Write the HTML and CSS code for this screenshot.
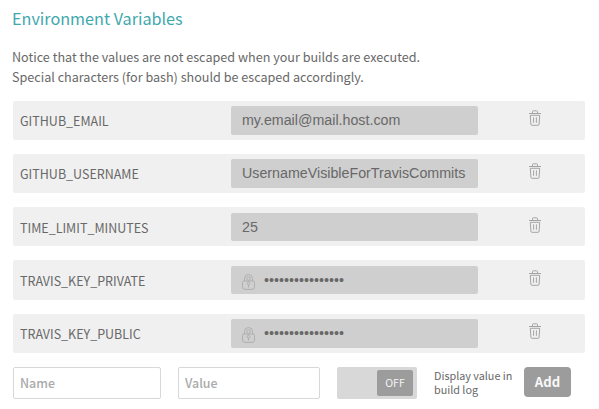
FILE: index.html
```html
<!DOCTYPE html>
<html lang="en">
<head>
<meta charset="utf-8">
<title>Environment Variables</title>
<link rel="stylesheet" href="styles.css">
</head>
<body>
<svg width="0" height="0" class="defs" aria-hidden="true">
  <symbol id="trash" viewBox="0 0 12 16">
    <path d="M0 3.500h12M3.500 3V1.600q0-.8.8-.8h3.400q.8 0 .8.8V3M1.300 5.300l.6 8.900q.1 1.100 1.100 1.100h6q1 0 1.100-1.100l.6-8.900zM4.600 7.300v5.500M7.400 7.300v5.500"/>
  </symbol>
  <symbol id="lock" viewBox="0 0 13 16">
    <path d="M2.500 7V4.500a4 4 0 0 1 8 0V7M2 7h9q1.500 0 1.500 1.500V13q0 2.400-2.400 2.400H2.900Q.5 15.400.5 13V8.500Q.5 7 2 7z"/>
    <circle cx="6.500" cy="4.600" r="1.800"/>
    <circle cx="6.500" cy="9.600" r="1.300"/>
    <path d="M6.500 11v2.500"/>
  </symbol>
</svg>
<main>
  <h1>Environment Variables</h1>
  <p class="notice">Notice that the values are not escaped when your builds are executed.<br>Special characters (for bash) should be escaped accordingly.</p>
  <ul class="vars">
    <li><span class="key">GITHUB_EMAIL</span><span class="value">my.email@mail.host.com</span><svg class="trash"><use href="#trash"/></svg></li>
    <li><span class="key">GITHUB_USERNAME</span><span class="value">UsernameVisibleForTravisCommits</span><svg class="trash"><use href="#trash"/></svg></li>
    <li class="low"><span class="key">TIME_LIMIT_MINUTES</span><span class="value">25</span><svg class="trash"><use href="#trash"/></svg></li>
    <li class="low"><span class="key">TRAVIS_KEY_PRIVATE</span><span class="value secret"><svg class="lock"><use href="#lock"/></svg><span class="dots">••••••••••••••••</span></span><svg class="trash"><use href="#trash"/></svg></li>
    <li><span class="key">TRAVIS_KEY_PUBLIC</span><span class="value secret"><svg class="lock"><use href="#lock"/></svg><span class="dots">••••••••••••••••</span></span><svg class="trash"><use href="#trash"/></svg></li>
  </ul>
  <form class="add">
    <input class="name" type="text" placeholder="Name">
    <input class="val" type="text" placeholder="Value">
    <div class="switch"><span class="knob">OFF</span></div>
    <div class="label"><div>Display value in</div><div>build log</div></div>
    <button type="button">Add</button>
  </form>
</main>
</body>
</html>
```
FILE: styles.css
```css
* { box-sizing: border-box; }
body {
  margin: 0;
  background: #fff;
  color: #686868;
  font-family: "Noto Sans CJK SC", "Noto Sans", sans-serif;
  font-size: 12.6px;
}
.defs { position: absolute; }
main { padding: 8px 14px 0 12px; }
h1 {
  margin: 0;
  color: #3fa8ad;
  font-size: 16.2px;
  font-weight: 400;
  line-height: 20px;
}
.notice { margin: 19px 0 0; line-height: 20px; }
.vars {
  display: grid;
  grid-template-rows: 39px 39px 39px 40px 39px;
  gap: 14px;
  margin: 14px 0 0 1px;
  padding: 0;
  list-style: none;
}
.vars li {
  display: flex;
  align-items: flex-start;
  padding: 5px 0 0 7px;
  border-radius: 2px;
  background: #f0f0f0;
}
.key { width: 211px; font-size: 12.5px; line-height: 30px; white-space: nowrap; }
.low .key { line-height: 32px; }
.value {
  width: 247px;
  height: 29px;
  padding-left: 11px;
  border-radius: 2px;
  background: #cfcfcf;
  font: 14.26px/28px "Liberation Sans", Arial, sans-serif;
}
.low .value { height: 28px; margin-top: 1px; }
.secret { display: flex; align-items: flex-start; }
.trash {
  width: 12px;
  height: 16px;
  margin: 4px 0 0 51px;
  fill: none;
  stroke: #a4a4a4;
}
.low .trash { margin-top: 5px; }
.lock {
  width: 13px;
  height: 16px;
  margin: 8px 9px 0 0;
  fill: none;
  stroke: #acacac;
  stroke-width: .9;
}
.dots { letter-spacing: .01px; }
.add { display: flex; align-items: flex-start; margin: 14px 0 0 1px; }
.add input {
  height: 32px;
  padding: 0 6px 1px;
  border: 1px solid #d8d8d8;
  border-radius: 2px;
  font: 500 12.4px "Noto Sans CJK SC", sans-serif;
}
.add input::placeholder { color: #aaa; opacity: 1; }
.name { width: 148px; }
.val { width: 142px; margin-left: 17px; }
.switch {
  display: flex;
  justify-content: flex-end;
  width: 80px;
  height: 32px;
  margin-left: 17px;
  padding: 3px 4px;
  border-radius: 2px;
  background: #d8d8d8;
}
.knob {
  width: 36px;
  height: 26px;
  border-radius: 2px;
  background: #9c9c9c;
  color: #f4f4f4;
  font-size: 10.6px;
  line-height: 26px;
  text-align: center;
}
.label {
  width: 90px;
  margin: 1px 0 0 17px;
  font-size: 10.8px;
  line-height: 14px;
  white-space: nowrap;
}
.add button {
  width: 47px;
  height: 30px;
  padding: 0 0 1px;
  border: 0;
  border-radius: 4px;
  background: #9c9c9c;
  color: #f8f8f8;
  font: 700 13.1px/29px "Noto Sans CJK SC", sans-serif;
}
```
